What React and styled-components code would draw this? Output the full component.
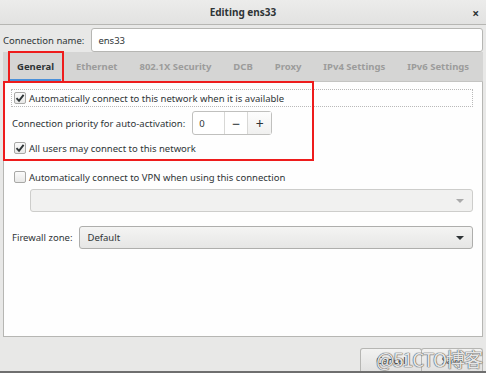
import React from "react";
import styled, { createGlobalStyle } from "styled-components";

const Global = createGlobalStyle`
  html, body { margin: 0; padding: 0; background: #e8e8e7; }
  body { font-family: "Noto Sans", "Open Sans", sans-serif; font-size: 9.5px; color: #2e3436; }
  * { box-sizing: border-box; }
`;

const Win = styled.div`
  width: 486px;
  height: 373px;
  display: flex;
  flex-direction: column;
  background: #e8e8e7;
  border-bottom: 2px solid #6f6f6f;
  position: relative;
  overflow: hidden;
`;

const TitleBar = styled.div`
  height: 25px;
  flex: none;
  display: flex;
  align-items: center;
  justify-content: center;
  position: relative;
  background: linear-gradient(#ececeb, #e2e2e1);
  border-bottom: 1px solid #b6b6b3;
  font-weight: bold;
  font-size: 10px;
  color: #2e3436;
`;

const Close = styled.span`
  position: absolute;
  right: 7px;
  top: 5px;
  font-size: 12px;
  font-weight: bold;
  color: #2e3436;
`;

const Body = styled.div`
  flex: 1;
  display: flex;
  flex-direction: column;
  padding: 3px 3px 0 3px;
`;

const NameRow = styled.div`
  display: flex;
  align-items: center;
  gap: 7px;
  height: 24px;
`;

const Label = styled.span`
  color: #2e3436;
  white-space: nowrap;
`;

const TextInput = styled.div`
  flex: 1;
  height: 24px;
  background: #ffffff;
  border: 1px solid #b6b6b3;
  border-radius: 3px;
  display: flex;
  align-items: center;
  padding-left: 6px;
  color: #2e3436;
`;

const Notebook = styled.div`
  display: flex;
  flex-direction: column;
  position: relative;
  height: 285px;
`;

const TabBar = styled.div`
  height: 30px;
  background: #d5d5d4;
  display: flex;
  align-items: stretch;
  padding-left: 7px;
  gap: 8px;
  border-bottom: 1px solid #c4c4c2;
`;

const Tab = styled.div`
  display: flex;
  align-items: center;
  padding: 2px 7px 0;
  font-weight: bold;
  white-space: nowrap;
  color: ${p => (p.$active ? "#2e3436" : "#9c9c9b")};
  border-bottom: 2px solid ${p => (p.$active ? "#4a90d9" : "transparent")};
`;

const Page = styled.div`
  flex: 1;
  background: #fefefe;
  border: 1px solid #b6b6b3;
  border-top: none;
  display: flex;
  flex-direction: column;
  padding: 7px 9px 0 7px;
`;

const CheckRow = styled.div`
  display: flex;
  align-items: center;
  gap: 3px;
  height: 18px;
  padding-left: 2px;
  margin-top: ${p => p.$mt || 0}px;
  border: 1px dotted ${p => (p.$focus ? "#b9b9b9" : "transparent")};
`;

const Box = styled.span`
  width: 12px;
  height: 12px;
  border: 1px solid #a8a8a6;
  border-radius: 2px;
  background: linear-gradient(#fbfbfb, #e8e8e7);
  display: inline-flex;
  align-items: center;
  justify-content: center;
  flex: none;
`;

const Row = styled.div`
  display: flex;
  align-items: center;
  gap: ${p => p.$gap || 8}px;
  margin-top: ${p => p.$mt || 0}px;
  padding-left: ${p => p.$pl || 0}px;
`;

const Spin = styled.div`
  display: flex;
  height: 24px;
  border: 1px solid #c0c0be;
  border-radius: 3px;
  background: #fff;
`;

const SpinEntry = styled.div`
  width: 32px;
  display: flex;
  align-items: center;
  padding-left: 6px;
  border-right: 1px solid #d8d8d6;
`;

const SpinBtn = styled.div`
  width: 23px;
  display: flex;
  align-items: center;
  justify-content: center;
  font-size: 14px;
  color: #2e3436;
  border-right: ${p => (p.$last ? "none" : "1px solid #d8d8d6")};
  background: ${p => (p.$last ? "linear-gradient(#fdfdfd,#f0f0ef)" : "#fff")};
`;

const Combo = styled.div`
  flex: 1;
  height: 23px;
  border: 1px solid ${p => (p.$disabled ? "#cdcdcb" : "#aeaeac")};
  border-radius: 3px;
  background: ${p => (p.$disabled ? "#f1f1f0" : "linear-gradient(#f4f4f3, #e6e6e5)")};
  display: flex;
  align-items: center;
  justify-content: space-between;
  padding: 0 8px 0 7px;
  color: #2e3436;
`;

const Arrow = styled.span`
  width: 0;
  height: 0;
  border-left: 4px solid transparent;
  border-right: 4px solid transparent;
  border-top: 4px solid ${p => (p.$disabled ? "#aaaaaa" : "#2e3436")};
`;

const Footer = styled.div`
  height: 34px;
  flex: none;
  display: flex;
  justify-content: flex-end;
  align-items: flex-end;
  padding-right: 3px;
`;

const Btn = styled.div`
  width: ${p => p.$w}px;
  height: 23px;
  border: 1px solid #b6b6b3;
  border-bottom: none;
  border-radius: 3px 3px 0 0;
  background: linear-gradient(#f2f2f1, #e2e2e1);
  display: flex;
  align-items: center;
  justify-content: center;
  color: #2e3436;
  margin-left: -1px;
`;

const RedBox = styled.div`
  position: absolute;
  border: 2px solid #ee1c1c;
  left: ${p => p.$x}px;
  top: ${p => p.$y}px;
  width: ${p => p.$w}px;
  height: ${p => p.$h}px;
  pointer-events: none;
`;

const Watermark = styled.div`
  position: absolute;
  right: 4px;
  bottom: 3px;
  font-size: 19px;
  font-family: "Noto Sans CJK SC", "Noto Sans", sans-serif;
  color: rgba(250, 250, 250, 0.9);
  text-shadow: 0 0 1px #555, 0 0 1px #555, 0 0 1px #777;
  letter-spacing: -1px;
  line-height: 1;
`;

const Check = () => (
  <svg width="10" height="10" viewBox="0 0 10 10">
    <path d="M1.5 5.2 L4 7.8 L8.6 1.8" fill="none" stroke="#2e3436" strokeWidth="1.9" />
  </svg>
);

const tabs = ["General", "Ethernet", "802.1X Security", "DCB", "Proxy", "IPv4 Settings", "IPv6 Settings"];

export default function App() {
  return (
    <>
      <Global />
      <Win>
        <TitleBar>
          Editing ens33
          <Close>×</Close>
        </TitleBar>
        <Body>
          <NameRow>
            <Label>Connection name:</Label>
            <TextInput>ens33</TextInput>
          </NameRow>
          <Notebook>
            <TabBar>
              {tabs.map((t, i) => (
                <Tab key={t} $active={i === 0}>{t}</Tab>
              ))}
            </TabBar>
            <Page>
              <CheckRow $focus>
                <Box><Check /></Box>
                <span>Automatically connect to this network when it is available</span>
              </CheckRow>
              <Row $mt={4} $pl={1} $gap={7}>
                <Label>Connection priority for auto-activation:</Label>
                <Spin>
                  <SpinEntry>0</SpinEntry>
                  <SpinBtn>−</SpinBtn>
                  <SpinBtn $last>+</SpinBtn>
                </Spin>
              </Row>
              <CheckRow $mt={4}>
                <Box><Check /></Box>
                <span>All users may connect to this network</span>
              </CheckRow>
              <CheckRow $mt={11}>
                <Box />
                <span>Automatically connect to VPN when using this connection</span>
              </CheckRow>
              <Row $mt={3} $pl={19}>
                <Combo $disabled>
                  <span />
                  <Arrow $disabled />
                </Combo>
              </Row>
              <Row $mt={14} $pl={1} $gap={7}>
                <Label>Firewall zone:</Label>
                <Combo>
                  <span>Default</span>
                  <Arrow />
                </Combo>
              </Row>
            </Page>
            <RedBox $x={5} $y={-1} $w={56} $h={32} />
            <RedBox $x={0} $y={29} $w={311} $h={80} />
          </Notebook>
        </Body>
        <Footer>
          <Btn $w={62}>Cancel</Btn>
          <Btn $w={62}>Save</Btn>
        </Footer>
        <Watermark>@51CTO博客</Watermark>
      </Win>
    </>
  );
}
